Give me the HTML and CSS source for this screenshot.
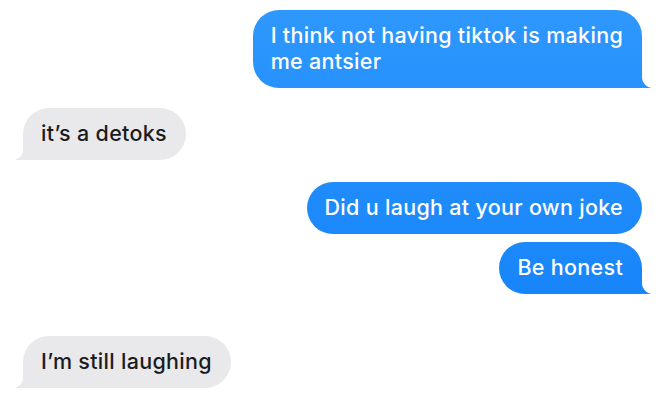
FILE: index.html
```html
<!DOCTYPE html>
<html lang="en">
<head>
  <meta charset="UTF-8" />
  <title>Messages</title>
  <link rel="stylesheet" href="styles.css">
</head>
<body>
  <div class="chat">
    <div class="msg sent tail">I think not having tiktok is making<br>me antsier</div>
    <div class="msg received tail gap">it’s a detoks</div>
    <div class="msg sent gap-lg">Did u laugh at your own joke</div>
    <div class="msg sent tail">Be honest</div>
    <div class="msg received tail big-gap">I’m still laughing</div>
  </div>
</body>
</html>
```
FILE: styles.css
```css
body {
  margin: 0;
  background: #fff;
  font-family: Inter, "Noto Sans", sans-serif;
}

.chat {
  display: flex;
  flex-direction: column;
  padding: 10px 20px 14px 23px;
}

.msg {
  position: relative;
  padding: 12px 19px 14px 18px;
  font-size: 21.5px;
  font-weight: 500;
  letter-spacing: 0.3px;
  line-height: 26px;
  border-radius: 26px;
  white-space: nowrap;
}

.gap {
  margin-top: 20px;
}

.gap-lg {
  margin-top: 22px;
}

.sent + .sent {
  margin-top: 8px;
}

.big-gap {
  margin-top: 42px;
}

.sent {
  align-self: flex-end;
  color: #fff;
  background: linear-gradient(#2e98fd, #0f7ef9) fixed;
}

.received {
  align-self: flex-start;
  color: #1c1c1e;
  background: #e9e9eb;
}

.sent.tail {
  border-bottom-right-radius: 0;
}

.received.tail {
  border-bottom-left-radius: 0;
}

.tail::before,
.tail::after {
  content: "";
  position: absolute;
  bottom: 0;
}

.sent.tail::before {
  right: -9px;
  width: 24px;
  height: 22px;
  background: linear-gradient(#2e98fd, #0f7ef9) fixed;
  border-bottom-left-radius: 18px 16px;
}

.sent.tail::after {
  right: -12px;
  width: 12px;
  height: 22px;
  background: #fff;
  border-bottom-left-radius: 11px;
}

.received.tail::before {
  left: -7px;
  width: 22px;
  height: 22px;
  background: #e9e9eb;
  border-bottom-right-radius: 16px 16px;
}

.received.tail::after {
  left: -10px;
  width: 10px;
  height: 22px;
  background: #fff;
  border-bottom-right-radius: 10px;
}
```
